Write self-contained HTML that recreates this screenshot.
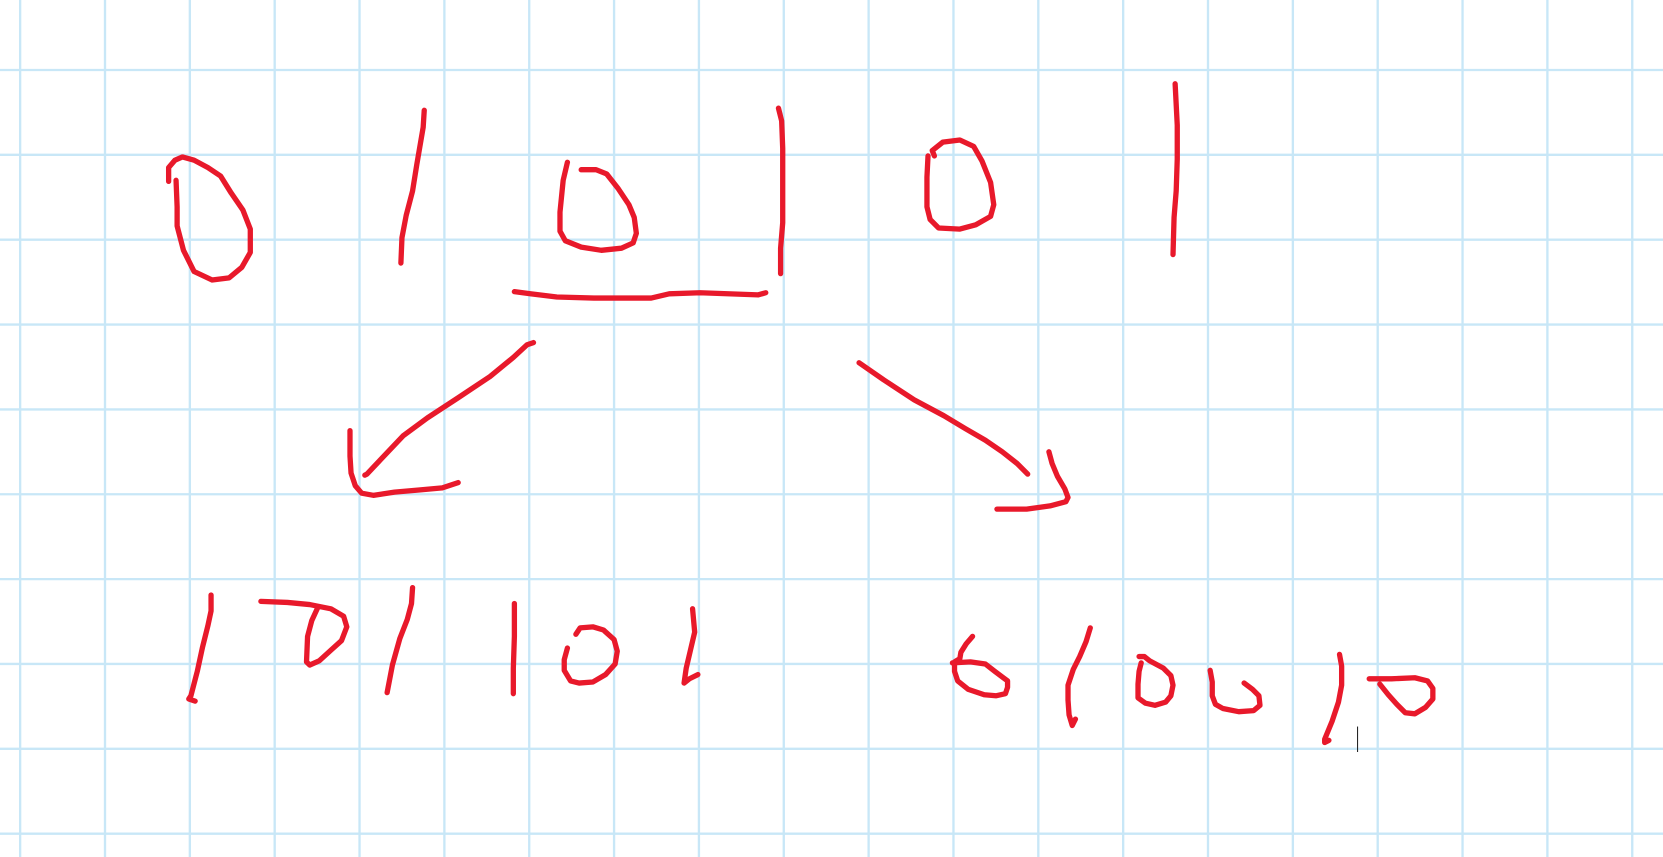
<!DOCTYPE html>
<html><head><style>html,body{margin:0;padding:0;background:#fff;overflow:hidden}svg{display:block}</style></head>
<body>
<svg width="1663" height="857" viewBox="0 0 1568 808" preserveAspectRatio="none" xmlns="http://www.w3.org/2000/svg">
<g stroke="#c8e7f7" stroke-width="2.2">
<line x1="19" y1="0" x2="19" y2="808"/><line x1="99" y1="0" x2="99" y2="808"/><line x1="179" y1="0" x2="179" y2="808"/><line x1="259" y1="0" x2="259" y2="808"/><line x1="339" y1="0" x2="339" y2="808"/><line x1="419" y1="0" x2="419" y2="808"/><line x1="499" y1="0" x2="499" y2="808"/><line x1="579" y1="0" x2="579" y2="808"/><line x1="659" y1="0" x2="659" y2="808"/><line x1="739" y1="0" x2="739" y2="808"/><line x1="819" y1="0" x2="819" y2="808"/><line x1="899" y1="0" x2="899" y2="808"/><line x1="979" y1="0" x2="979" y2="808"/><line x1="1059" y1="0" x2="1059" y2="808"/><line x1="1139" y1="0" x2="1139" y2="808"/><line x1="1219" y1="0" x2="1219" y2="808"/><line x1="1299" y1="0" x2="1299" y2="808"/><line x1="1379" y1="0" x2="1379" y2="808"/><line x1="1459" y1="0" x2="1459" y2="808"/><line x1="1539" y1="0" x2="1539" y2="808"/>
<line x1="0" y1="66" x2="1568" y2="66"/><line x1="0" y1="146" x2="1568" y2="146"/><line x1="0" y1="226" x2="1568" y2="226"/><line x1="0" y1="306" x2="1568" y2="306"/><line x1="0" y1="386" x2="1568" y2="386"/><line x1="0" y1="466" x2="1568" y2="466"/><line x1="0" y1="546" x2="1568" y2="546"/><line x1="0" y1="626" x2="1568" y2="626"/><line x1="0" y1="706" x2="1568" y2="706"/><line x1="0" y1="786" x2="1568" y2="786"/>
</g>
<g fill="none" stroke="#e8192b" stroke-width="5" stroke-linecap="round" stroke-linejoin="round">
<path d="M159 171 L159 158 L165 151 L172 148 L183 151 L196 158 L208 166 L218 182 L229 198 L236 216 L236 238 L228 252 L216 262 L200 264 L183 256 L173 236 L167 213 L167 195 L166 170"/>
<path d="M400 104 L399 120 L393 155 L389 180 L383 203 L379 224 L378 248"/>
<path d="M535 153 L531 170 L528 200 L528 218 L533 227 L548 233 L567 236 L586 234 L597 229 L600 220 L598 205 L593 193 L583 178 L572 164 L562 160 L548 160"/>
<path d="M734 102 L737 114 L738 140 L738 210 L736 234 L736 258"/>
<path d="M881 147 L879 142 L889 134 L905 132 L918 138 L926 152 L934 172 L937 193 L934 204 L920 212 L905 216 L885 215 L877 207 L874 195 L874 167 L875 147"/>
<path d="M1108 79 L1110 118 L1110 150 L1109 180 L1107 205 L1106 240"/>
<path d="M485 275 L500 277 L525 280 L560 281 L614 281 L631 277 L660 276 L715 278 L722 276"/>
<path d="M503 323 L497 325 L484 337 L462 355 L432 375 L403 394 L380 411 L362 430 L346 447 L344 448"/>
<path d="M330 406 L330 430 L331 446 L335 458 L341 465 L352 467 L372 464 L395 462 L417 460 L432 455"/>
<path d="M810 342 L833 358 L862 377 L890 392 L910 404 L929 415 L945 426 L959 437 L969 447"/>
<path d="M989 426 L992 437 L997 449 L1004 461 L1007 469 L1005 473 L990 477 L968 480 L940 480"/>
<path d="M199 561 L199 576 L196 590 L191 610 L186 633 L180 656 L178 659 L184 661"/>
<path d="M246 567 L271 568 L292 570 L312 574 L324 581 L327 591 L322 604 L312 613 L301 623 L292 627 L289 624 L290 600 L294 585 L300 572"/>
<path d="M389 554 L388 569 L384 584 L377 602 L370 627 L365 653"/>
<path d="M485 569 L485 600 L484 630 L484 654"/>
<path d="M543 598 L547 592 L559 591 L569 594 L579 603 L582 614 L580 626 L571 636 L559 643 L546 644 L538 642 L532 632 L532 622 L535 611"/>
<path d="M653 574 L655 596 L651 613 L647 630 L645 644 L650 640 L658 636"/>
<path d="M917 600 L911 607 L906 615 L905 621 L900 624 L900 633 L903 642 L913 650 L928 655 L939 656 L948 654 L950 648 L950 642 L946 639 L938 633 L929 626 L915 624 L898 625"/>
<path d="M1028 592 L1024 605 L1018 619 L1012 631 L1007 646 L1007 660 L1008 674 L1011 684 L1014 678"/>
<path d="M1074 619 L1079 619 L1084 623 L1097 630 L1104 637 L1106 646 L1104 656 L1099 662 L1089 665 L1080 663 L1073 658 L1073 645 L1074 633 L1076 625"/>
<path d="M1141 632 L1143 643 L1143 656 L1146 664 L1153 668 L1168 671 L1182 670 L1188 665 L1187 656 L1181 650 L1173 644"/>
<path d="M1263 617 L1265 628 L1265 646 L1262 662 L1256 680 L1249 697 L1249 700 L1253 698"/>
<path d="M1291 640 L1312 640 L1334 639 L1346 642 L1351 649 L1351 659 L1344 667 L1334 673 L1325 672 L1317 664 L1309 655 L1301 645"/>
</g>
<line x1="1280" y1="685" x2="1280" y2="709" stroke="#222" stroke-width="1"/>
</svg>
</body></html>
